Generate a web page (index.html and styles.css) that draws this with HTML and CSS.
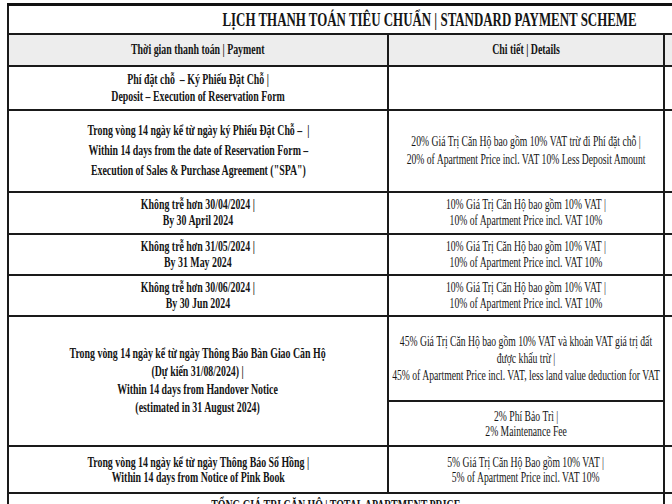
FILE: index.html
```html
<!DOCTYPE html>
<html lang="vi">
<head>
<meta charset="utf-8">
<title>Lịch thanh toán tiêu chuẩn</title>
<link rel="stylesheet" href="styles.css">
</head>
<body>
<div class="page">
  <table class="scheme">
    <colgroup>
      <col class="c1"><col class="c2"><col class="c3">
    </colgroup>
    <tr class="r-title">
      <td colspan="3" class="title"><span class="t">LỊCH THANH TOÁN TIÊU CHUẨN | STANDARD PAYMENT SCHEME</span></td>
    </tr>
    <tr class="r-head">
      <td class="b"><span class="t">Thời gian thanh toán | Payment</span></td>
      <td class="b"><span class="t">Chi tiết | Details</span></td>
      <td class="b"></td>
    </tr>
    <tr class="r1">
      <td class="b"><span class="t">Phí đặt chỗ &nbsp;– Ký Phiếu Đặt Chỗ |<br>Deposit – Execution of Reservation Form</span></td>
      <td></td>
      <td></td>
    </tr>
    <tr class="r2">
      <td class="b"><span class="t">Trong vòng 14 ngày kể từ ngày ký Phiếu Đặt Chỗ – &nbsp;|<br>Within 14 days from the date of Reservation Form –<br>Execution of Sales &amp; Purchase Agreement ("SPA")</span></td>
      <td><span class="t">20% Giá Trị Căn Hộ bao gồm 10% VAT trừ đi Phí đặt chỗ |<br>20% of Apartment Price incl. VAT 10% Less Deposit Amount</span></td>
      <td></td>
    </tr>
    <tr class="r3">
      <td class="b"><span class="t">Không trễ hơn 30/04/2024 |<br>By 30 April 2024</span></td>
      <td><span class="t">10% Giá Trị Căn Hộ bao gồm 10% VAT |<br>10% of Apartment Price incl. VAT 10%</span></td>
      <td></td>
    </tr>
    <tr class="r4">
      <td class="b"><span class="t">Không trễ hơn 31/05/2024 |<br>By 31 May 2024</span></td>
      <td><span class="t">10% Giá Trị Căn Hộ bao gồm 10% VAT |<br>10% of Apartment Price incl. VAT 10%</span></td>
      <td></td>
    </tr>
    <tr class="r5">
      <td class="b"><span class="t">Không trễ hơn 30/06/2024 |<br>By 30 Jun 2024</span></td>
      <td><span class="t">10% Giá Trị Căn Hộ bao gồm 10% VAT |<br>10% of Apartment Price incl. VAT 10%</span></td>
      <td></td>
    </tr>
    <tr class="r6a">
      <td class="b" rowspan="2"><span class="t">Trong vòng 14 ngày kể từ ngày Thông Báo Bàn Giao Căn Hộ<br>(Dự kiến 31/08/2024) |<br>Within 14 days from Handover Notice<br>(estimated in 31 August 2024)</span></td>
      <td><span class="t">45% Giá Trị Căn Hộ bao gồm 10% VAT và khoản VAT giá trị đất<br>được khấu trừ |<br>45% of Apartment Price incl. VAT, less land value deduction for VAT</span></td>
      <td rowspan="2"></td>
    </tr>
    <tr class="r6b">
      <td><span class="t">2% Phí Bảo Trì |<br>2% Maintenance Fee</span></td>
    </tr>
    <tr class="r7">
      <td class="b"><span class="t">Trong vòng 14 ngày kể từ ngày Thông Báo Sổ Hồng |<br>Within 14 days from Notice of Pink Book</span></td>
      <td><span class="t">5% Giá Trị Căn Hộ Bao gồm 10% VAT |<br>5% of Apartment Price incl. VAT 10%</span></td>
      <td></td>
    </tr>
    <tr class="r8">
      <td colspan="2" class="b total"><span class="t">TỔNG GIÁ TRỊ CĂN HỘ | TOTAL APARTMENT PRICE</span></td>
      <td></td>
    </tr>
  </table>
</div>
</body>
</html>
```

FILE: styles.css
```css
html, body {
  margin: 0;
  padding: 0;
  background: #ffffff;
}
body {
  width: 672px;
  height: 504px;
  overflow: hidden;
  font-family: "Liberation Serif", "Times New Roman", serif;
  color: #151515;
}
.page {
  padding: 3px 0 0 7px;
}
.scheme {
  border-collapse: collapse;
  table-layout: fixed;
  width: 843px;
  border-top: 3px solid #111;
  border-left: 2px solid #111;
}
.c1 { width: 380px; }
.c2 { width: 276px; }
.c3 { width: 187px; }
.scheme td {
  border: 2px solid #1a1a1a;
  text-align: center;
  vertical-align: middle;
  padding: 0;
  font-size: 14px;
  line-height: 18px;
  overflow: hidden;
}
.t {
  display: inline-block;
  white-space: nowrap;
  margin: 0 -200px;
  transform: scaleX(0.69);
  transform-origin: center;
}
.scheme td.b { font-weight: bold; }
.scheme td.b .t { transform: scaleX(0.705); }
.r-title td { height: 27px; border-bottom-width: 1px; }
.scheme td.title {
  font-size: 19px;
  font-weight: bold;
  line-height: 22px;
}
.scheme td.title .t { transform: scaleX(0.68); }
.r-head td { height: 30px; background: #ededed; }
.r1 td { height: 42px; line-height: 17px; }
.r2 td { height: 80px; }
.r2 td.b { line-height: 20px; }
.r3 td, .r4 td, .r5 td { height: 39px; line-height: 16px; }
.r3 td { height: 40px; }
.r6a td { height: 83px; line-height: 17px; }
.r6a td.b { line-height: 18px; }
.r6b td { height: 43px; line-height: 15px; }
.r7 td { height: 45px; line-height: 15px; }
.r8 td { height: 40px; vertical-align: top; }
.scheme td.total { padding-top: 3px; }
```
